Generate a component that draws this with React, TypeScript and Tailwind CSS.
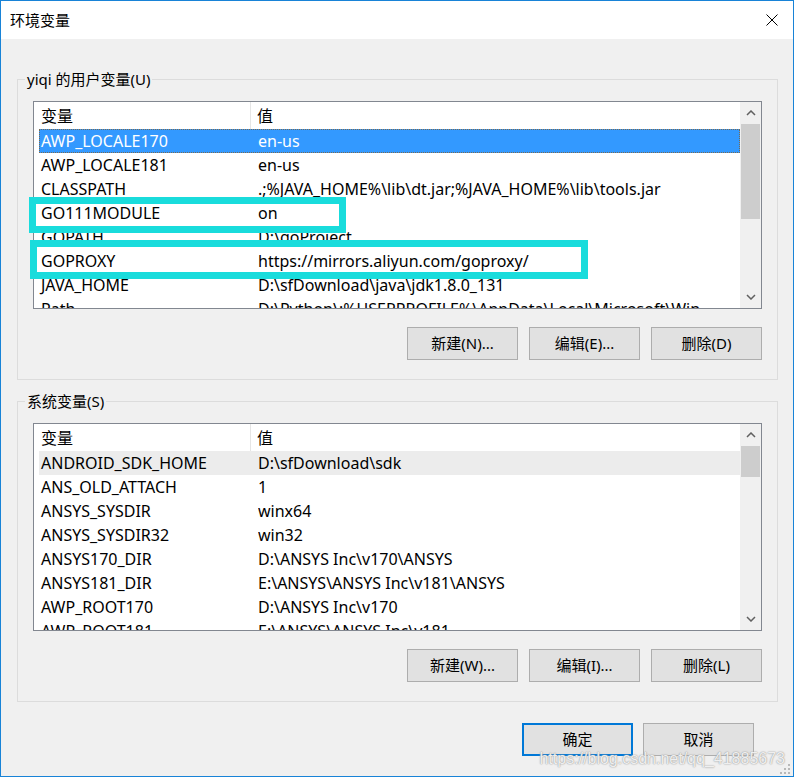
import React from "react";

type Row = { name: string; value: string };

const userVars: Row[] = [
  { name: "AWP_LOCALE170", value: "en-us" },
  { name: "AWP_LOCALE181", value: "en-us" },
  { name: "CLASSPATH", value: ".;%JAVA_HOME%\\lib\\dt.jar;%JAVA_HOME%\\lib\\tools.jar" },
  { name: "GO111MODULE", value: "on" },
  { name: "GOPATH", value: "D:\\goProject" },
  { name: "GOPROXY", value: "https://mirrors.aliyun.com/goproxy/" },
  { name: "JAVA_HOME", value: "D:\\sfDownload\\java\\jdk1.8.0_131" },
  { name: "Path", value: "D:\\Python\\;%USERPROFILE%\\AppData\\Local\\Microsoft\\WindowsApps;" },
];

const systemVars: Row[] = [
  { name: "ANDROID_SDK_HOME", value: "D:\\sfDownload\\sdk" },
  { name: "ANS_OLD_ATTACH", value: "1" },
  { name: "ANSYS_SYSDIR", value: "winx64" },
  { name: "ANSYS_SYSDIR32", value: "win32" },
  { name: "ANSYS170_DIR", value: "D:\\ANSYS Inc\\v170\\ANSYS" },
  { name: "ANSYS181_DIR", value: "E:\\ANSYS\\ANSYS Inc\\v181\\ANSYS" },
  { name: "AWP_ROOT170", value: "D:\\ANSYS Inc\\v170" },
  { name: "AWP_ROOT181", value: "E:\\ANSYS\\ANSYS Inc\\v181" },
];

function Chevron({ down }: { down?: boolean }) {
  return (
    <svg width="10" height="6" viewBox="0 0 10 6" className="text-[#606060]">
      <polyline
        points={down ? "1,1 5,5 9,1" : "1,5 5,1 9,5"}
        fill="none"
        stroke="currentColor"
        strokeWidth="1.5"
      />
    </svg>
  );
}

function VarList({
  rows,
  selected,
  hovered,
  thumbHeight,
}: {
  rows: Row[];
  selected?: number;
  hovered?: number;
  thumbHeight: string;
}) {
  return (
    <div className="flex h-[208px] border border-[#828790] bg-white">
      <div className="flex-1 overflow-hidden">
        {/* header */}
        <div className="flex h-[27px] items-center">
          <div className="flex h-full w-[217px] items-center border-r border-[#e5e5e5] pl-[7px]">变量</div>
          <div className="pl-[6px]">值</div>
        </div>
        {rows.map((r, i) => (
          <div
            key={r.name}
            className={
              i === selected
                ? "ml-[5px] flex h-[24px] items-center border border-dotted border-[#7a6a50] bg-[#3399ff] pl-[1px] text-white"
                : i === hovered
                ? "ml-[5px] flex h-[24px] items-center bg-[#ececec] pl-[2px]"
                : "ml-[5px] flex h-[24px] items-center pl-[2px]"
            }
          >
            <div className="w-[217px] shrink-0 whitespace-nowrap">{r.name}</div>
            <div className="w-[458px] truncate">{r.value}</div>
          </div>
        ))}
      </div>
      {/* scrollbar */}
      <div className="flex w-[21px] flex-col bg-[#f0f0f0]">
        <div className="flex h-[22px] items-center justify-center">
          <Chevron />
        </div>
        <div className={`mx-[1px] bg-[#cdcdcd] ${thumbHeight}`} />
        <div className="flex-1" />
        <div className="flex h-[22px] items-center justify-center">
          <Chevron down />
        </div>
      </div>
    </div>
  );
}

function Btn({ children, primary }: { children: React.ReactNode; primary?: boolean }) {
  return (
    <div
      className={
        primary
          ? "flex h-[33px] w-[111px] items-center justify-center border-2 border-[#0078d7] bg-[#e1e1e1] text-[15px]"
          : "flex h-[33px] w-[111px] items-center justify-center border border-[#adadad] bg-[#e1e1e1] text-[15px]"
      }
    >
      {children}
    </div>
  );
}

function Group({ label, children }: { label: string; children: React.ReactNode }) {
  return (
    <div className="relative border border-[#dcdcdc] px-[15px] pt-[21px] pb-[19px]">
      <div className="absolute -top-[12px] left-[7px] bg-[#f0f0f0] px-[2px] text-[15px] leading-[22px]">{label}</div>
      {children}
    </div>
  );
}

export default function App() {
  return (
    <div
      className="relative flex h-[777px] w-[794px] flex-col border border-[#1883d7] bg-[#f0f0f0] text-[16px] text-black"
      style={{ fontFamily: '"Noto Sans", "Noto Sans CJK SC", sans-serif' }}
    >
      {/* title bar */}
      <div className="flex h-[38px] items-center justify-between bg-white pl-[9px] pr-[15px]">
        <span className="text-[15px]">环境变量</span>
        <svg width="12" height="12" viewBox="0 0 12 12">
          <line x1="0.5" y1="0.5" x2="11.5" y2="11.5" stroke="#000" strokeWidth="1" />
          <line x1="11.5" y1="0.5" x2="0.5" y2="11.5" stroke="#000" strokeWidth="1" />
        </svg>
      </div>

      <div className="flex flex-col pl-[16px] pr-[15px] pt-[40px]">
        <Group label="yiqi 的用户变量(U)">
          <VarList rows={userVars} selected={0} thumbHeight="h-[95px]" />
          <div className="mt-[18px] flex justify-end gap-[11px]">
            <Btn>新建(N)...</Btn>
            <Btn>编辑(E)...</Btn>
            <Btn>删除(D)</Btn>
          </div>
        </Group>

        <div className="mt-[21px]">
          <Group label="系统变量(S)">
            <VarList rows={systemVars} hovered={0} thumbHeight="h-[31px]" />
            <div className="mt-[18px] flex justify-end gap-[11px]">
              <Btn>新建(W)...</Btn>
              <Btn>编辑(I)...</Btn>
              <Btn>删除(L)</Btn>
            </div>
          </Group>
        </div>

        <div className="mt-[21px] flex justify-end gap-[10px] pr-[24px]">
          <Btn primary>确定</Btn>
          <Btn>取消</Btn>
        </div>
      </div>

      {/* annotation boxes */}
      <div className="absolute left-[28px] top-[196px] h-[36px] w-[317px] border-[7px] border-[#19dcdc]" />
      <div className="absolute left-[29px] top-[239px] h-[39px] w-[558px] border-[7px] border-[#19dcdc]" />

      {/* watermark */}
      <div
        className="absolute right-[8px] top-[746px] text-[16px] text-white/85 [text-shadow:0_0_1px_#8a8a8a,0_0_2px_#b0b0b0]"
        style={{ fontFamily: '"Liberation Sans", sans-serif' }}
      >
        https://blog.csdn.net/qq_41885673
      </div>

      {/* resize grip */}
      <svg className="absolute bottom-[1px] right-[2px]" width="11" height="11" viewBox="0 0 11 11">
        <rect x="8" y="0" width="2" height="2" fill="#b8b8b8" />
        <rect x="4" y="4" width="2" height="2" fill="#b8b8b8" />
        <rect x="8" y="4" width="2" height="2" fill="#b8b8b8" />
        <rect x="0" y="8" width="2" height="2" fill="#b8b8b8" />
        <rect x="4" y="8" width="2" height="2" fill="#b8b8b8" />
        <rect x="8" y="8" width="2" height="2" fill="#b8b8b8" />
      </svg>
    </div>
  );
}
